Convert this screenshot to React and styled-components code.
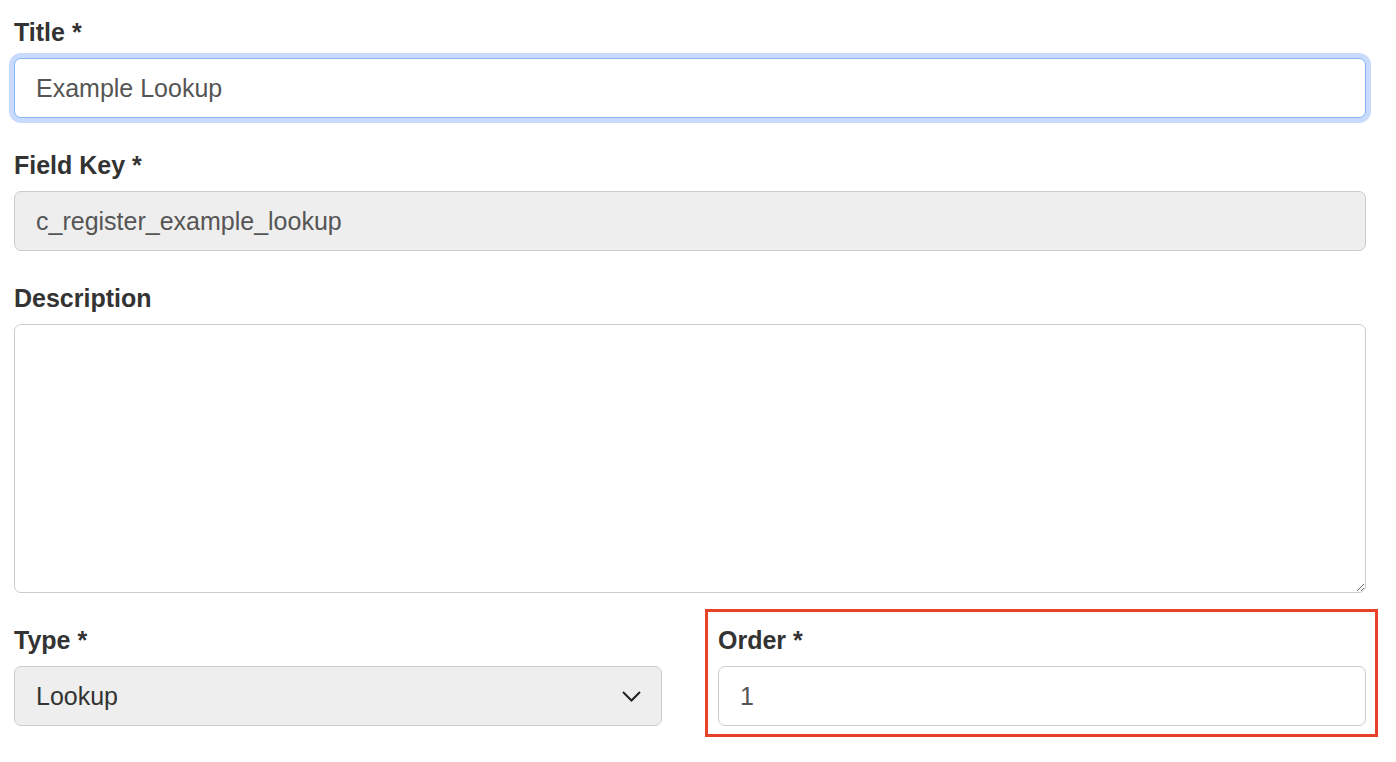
import React from 'react';
import styled, { createGlobalStyle, css } from 'styled-components';

const GlobalStyle = createGlobalStyle`
  body {
    margin: 0;
    background: #fff;
    font-family: "Liberation Sans", Arial, Helvetica, sans-serif;
  }
`;

const Form = styled.form`
  width: 1352px;
  padding: 14px 30px 0 14px;
`;

const Group = styled.div`
  position: relative;
  margin-bottom: 29px;
  ${props =>
    props.highlighted &&
    css`
      &::after {
        content: '';
        position: absolute;
        top: -13px;
        left: -13px;
        right: -12px;
        bottom: -11px;
        border: 3px solid #e8432a;
        pointer-events: none;
      }
    `}
`;

const Label = styled.label`
  display: block;
  font-size: 25px;
  line-height: 36px;
  font-weight: bold;
  color: #333;
  margin-bottom: 8px;
`;

const fieldBase = css`
  display: block;
  box-sizing: border-box;
  width: 100%;
  font-family: "Liberation Sans", Arial, Helvetica, sans-serif;
  font-size: 25px;
  color: #555;
  border: 1px solid #ccc;
  border-radius: 7px;
  padding: 0 21px;
  outline: none;
`;

const Input = styled.input`
  ${fieldBase}
  height: 60px;
  background: ${props => (props.disabled ? '#eee' : '#fff')};
  ${props =>
    props.focused &&
    css`
      border-color: #86b7fe;
      box-shadow: 0 0 0 5px #cadafc;
    `}
  &:disabled {
    color: #555;
    -webkit-text-fill-color: #555;
    opacity: 1;
  }
`;

const TextArea = styled.textarea`
  ${fieldBase}
  height: 269px;
  padding: 12px 21px;
  resize: vertical;
`;

const Row = styled.div`
  display: grid;
  grid-template-columns: 1fr 1fr;
  column-gap: 56px;
`;

const SelectWrap = styled.div`
  position: relative;
`;

const Select = styled.select`
  ${fieldBase}
  height: 60px;
  appearance: none;
  -webkit-appearance: none;
  background: #eee;
  color: #333;
`;

const Chevron = styled.svg`
  position: absolute;
  right: 21px;
  top: 50%;
  margin-top: -5px;
  width: 19px;
  height: 11px;
  pointer-events: none;
`;

export default function App() {
  return (
    <>
      <GlobalStyle />
      <Form onSubmit={e => e.preventDefault()}>
        <Group>
          <Label>Title *</Label>
          <Input focused type="text" defaultValue="Example Lookup" />
        </Group>
        <Group>
          <Label>Field Key *</Label>
          <Input type="text" disabled defaultValue="c_register_example_lookup" />
        </Group>
        <Group>
          <Label>Description</Label>
          <TextArea />
        </Group>
        <Row>
          <Group>
            <Label>Type *</Label>
            <SelectWrap>
              <Select defaultValue="lookup">
                <option value="lookup">Lookup</option>
              </Select>
              <Chevron viewBox="0 0 19 11">
                <polyline points="1,1 9.5,9.5 18,1" fill="none" stroke="#222" strokeWidth="2" />
              </Chevron>
            </SelectWrap>
          </Group>
          <Group highlighted>
            <Label>Order *</Label>
            <Input type="text" defaultValue="1" />
          </Group>
        </Row>
      </Form>
    </>
  );
}
